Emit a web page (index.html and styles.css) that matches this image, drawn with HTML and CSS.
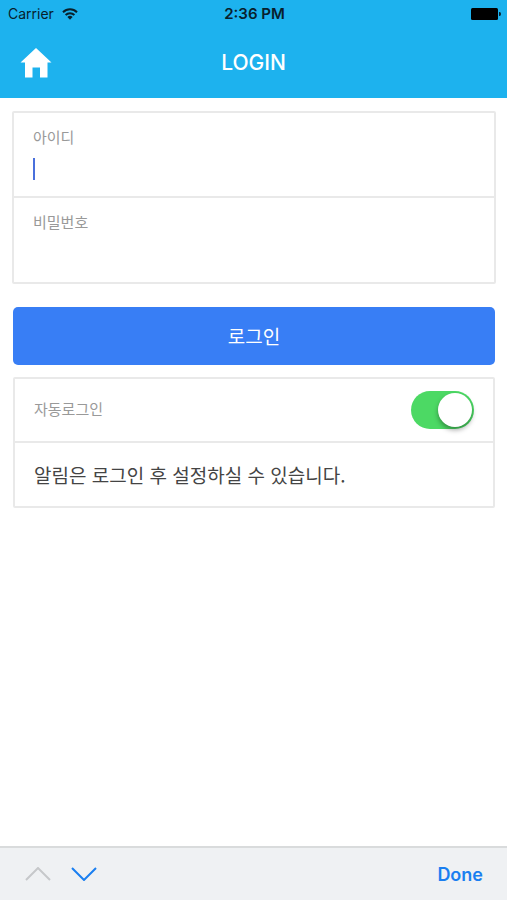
FILE: index.html
```html
<!DOCTYPE html>
<html lang="ko">
<head>
<meta charset="utf-8">
<meta name="viewport" content="width=device-width, initial-scale=1">
<title>LOGIN</title>
<link rel="stylesheet" href="styles.css">
</head>
<body>
<header class="top">
  <div class="status">
    <div class="carrier">
      <span>Carrier</span>
      <svg width="16" height="12" viewBox="0 0 16 12" aria-hidden="true">
        <g fill="none" stroke="#08202c" stroke-width="2">
          <path d="M1 4.2a10 10 0 0 1 14 0"/>
          <path d="M3.6 7a6.3 6.3 0 0 1 8.8 0"/>
        </g>
        <path d="M5.4 8.9a3.8 3.8 0 0 1 5.2 0L8 11.8z" fill="#08202c"/>
      </svg>
    </div>
    <span class="clock">2:36 PM</span>
    <svg class="battery" width="30" height="12" viewBox="0 0 30 12" aria-hidden="true">
      <rect width="27" height="12" rx="1.5" fill="#000"/>
      <path d="M28 4h.5a1.5 2 0 0 1 0 4H28z" fill="#08202c"/>
    </svg>
  </div>
  <nav class="bar">
    <a class="home" href="#" aria-label="홈">
      <svg width="32" height="30" viewBox="0 0 32 30" aria-hidden="true">
        <path d="M16 0L31.5 14.5H27.5V29.5H20V19.5H12.5V29.5H5V14.5H.5z" fill="#fff"/>
      </svg>
    </a>
    <h1 class="title">LOGIN</h1>
  </nav>
</header>
<main class="content">
  <form class="form">
    <div class="fields">
      <div class="field">
        <label for="user">아이디</label>
        <input class="active" id="user" type="text">
      </div>
      <div class="field">
        <label for="pass">비밀번호</label>
        <input id="pass" type="password">
      </div>
    </div>
    <button class="submit" type="button">로그인</button>
    <div class="options">
      <div class="option">
        <label for="auto">자동로그인</label>
        <input class="switch" id="auto" type="checkbox" role="switch" checked>
      </div>
      <p class="note">알림은 로그인 후 설정하실 수 있습니다.</p>
    </div>
  </form>
</main>
<footer class="accessory">
  <div class="arrows">
    <button type="button" aria-label="이전" disabled>
      <svg width="26" height="14" viewBox="0 0 26 14" aria-hidden="true"><path d="M1 13L13 1L25 13" fill="none" stroke="#c6c8ca" stroke-width="2"/></svg>
    </button>
    <button type="button" aria-label="다음">
      <svg width="26" height="14" viewBox="0 0 26 14" aria-hidden="true"><path d="M1 1L13 13L25 1" fill="none" stroke="#1a7ff0" stroke-width="2"/></svg>
    </button>
  </div>
  <button class="done" type="button">Done</button>
</footer>
</body>
</html>
```
FILE: styles.css
```css
* {
  box-sizing: border-box;
}

body {
  margin: 0;
  min-height: 100vh;
  display: flex;
  flex-direction: column;
  background: #fff;
  font-family: Inter, "Noto Sans CJK KR", sans-serif;
}

button {
  border: 0;
  padding: 0;
  background: none;
  font: inherit;
}

svg {
  display: block;
}

.top {
  background: #1db2ee;
}

.status {
  display: grid;
  grid-template-columns: 1fr auto 1fr;
  align-items: center;
  height: 27px;
  padding: 0 6px 0 8px;
  font-size: 14px;
  color: #08202c;
}

.carrier {
  display: flex;
  align-items: center;
  gap: 8px;
}

.clock {
  font-size: 15px;
  font-weight: 600;
}

.battery {
  justify-self: end;
}

.bar {
  display: grid;
  grid-template-columns: 1fr auto 1fr;
  align-items: center;
  height: 71px;
  padding: 0 20px;
}

.title {
  margin: 0;
  font-size: 21px;
  font-weight: 500;
  color: #fff;
}

.content {
  flex: 1;
  padding: 13px 11px 13px 12px;
}

.fields,
.options {
  border: 2px solid #e9e9e9;
  border-radius: 2px;
}

.field {
  display: flex;
  flex-direction: column;
  height: 83px;
  padding: 14px 19px 0;
}

.field + .field {
  height: 86px;
  border-top: 2px solid #e9e9e9;
}

.field label,
.option label {
  font-size: 15px;
  line-height: 22px;
  color: #999;
}

.field input {
  width: 100%;
  height: 24px;
  margin-top: 8px;
  border: 0;
  padding: 0;
  outline: 0;
  background: none;
  font: inherit;
  font-size: 19px;
  caret-color: #4a70dc;
}

.field .active {
  background: linear-gradient(#4a70dc, #4a70dc) left center / 2px 22px no-repeat;
}

.submit {
  display: block;
  width: calc(100% - 2px);
  height: 58px;
  margin: 23px 1px 12px;
  border-radius: 5px;
  padding-bottom: 2px;
  background: #387ef5;
  font-size: 19px;
  color: #fff;
}

.options {
  margin: 0 1px;
}

.option {
  display: flex;
  align-items: center;
  justify-content: space-between;
  height: 64px;
  padding: 0 19px;
  border-bottom: 2px solid #e9e9e9;
}

.switch {
  appearance: none;
  width: 63px;
  height: 38px;
  margin: 0;
  border-radius: 19px;
  padding: 2px;
  background: #d8d8d8;
}

.switch::before {
  content: "";
  display: block;
  width: 34px;
  height: 34px;
  border-radius: 50%;
  background: #fff;
  box-shadow: 0 3px 5px rgba(0, 0, 0, 0.35);
}

.switch:checked {
  background: #4cd964;
}

.switch:checked::before {
  margin-left: auto;
}

.note {
  margin: 0;
  padding: 0 19px;
  font-family: "Noto Sans CJK KR", sans-serif;
  font-size: 19px;
  line-height: 63px;
  color: #444;
}

.accessory {
  display: flex;
  align-items: center;
  justify-content: space-between;
  height: 54px;
  padding: 0 24px 0 25px;
  border-top: 2px solid #d9dbdc;
  background: #eff1f3;
}

.arrows {
  display: flex;
  gap: 20px;
}

.done {
  font-size: 18px;
  font-weight: 600;
  color: #1a7ff0;
}
```
